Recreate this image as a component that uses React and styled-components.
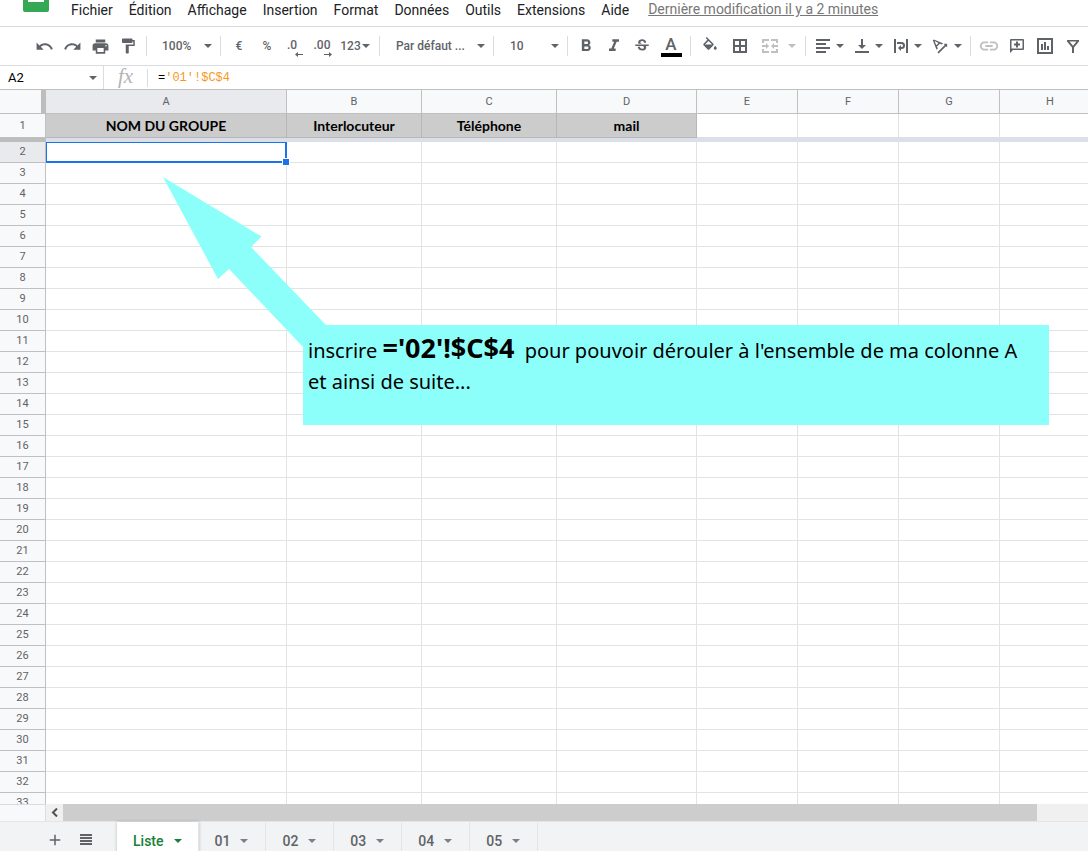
import React from 'react';
import styled, { createGlobalStyle, css } from 'styled-components';
import {
  MdAdd,
  MdFormatBold,
  MdFormatItalic,
  MdFormatPaint,
  MdLink,
  MdPrint,
  MdRedo,
  MdStrikethroughS,
  MdTextRotationAngleup,
  MdUndo,
} from 'react-icons/md';

const colors = {
  icon: '#5f6368',
  line: '#dadce0',
  headerLine: '#c0c0c0',
  header: '#f8f9fa',
  headerActive: '#e8eaed',
  grid: '#e2e3e3',
  freeze: '#dadfe8',
  freezeDark: '#bdbdbd',
  filled: '#cccccc',
  blue: '#1a73e8',
  green: '#188038',
  note: '#8dfffb',
};

const GlobalStyle = createGlobalStyle`
  * {
    box-sizing: border-box;
  }
  body {
    margin: 0;
    overflow: hidden;
    background: #fff;
    font-family: Roboto, 'Liberation Sans', sans-serif;
  }
  button, select, input {
    margin: 0;
    padding: 0;
    border: 0;
    background: none;
    color: inherit;
    font: inherit;
  }
`;

const flexCenter = css`
  display: flex;
  align-items: center;
  justify-content: center;
`;

const Screen = styled.div`
  display: flex;
  flex-direction: column;
  height: 100vh;
`;

/* menu bar */

const MenuBar = styled.header`
  display: flex;
  align-items: flex-start;
  height: 27px;
  flex-shrink: 0;
  padding-left: 23px;
  border-bottom: 1px solid ${colors.line};
`;

const Logo = styled.svg`
  display: block;
  margin-right: 14px;
`;

const Menu = styled.nav`
  display: flex;
  flex-shrink: 0;
`;

const MenuButton = styled.button`
  padding: 0 8px;
  font-size: 14px;
  line-height: 20px;
  color: #202124;
  white-space: nowrap;
`;

const LastEdit = styled.a`
  margin-left: 11px;
  font-size: 14px;
  line-height: 18px;
  color: #777;
  white-space: nowrap;
`;

/* toolbar */

const Toolbar = styled.div`
  display: flex;
  align-items: center;
  height: 39px;
  flex-shrink: 0;
  padding-left: 30px;
  border-bottom: 1px solid ${colors.line};
  color: ${colors.icon};
  overflow: hidden;
`;

const Separator = styled.span`
  width: 1px;
  height: 20px;
  margin: 0 4px;
  flex-shrink: 0;
  background: ${colors.line};
`;

const ToolButton = styled.button`
  ${flexCenter};
  width: ${({ $width = 28 }) => $width}px;
  height: 28px;
  flex-shrink: 0;
  gap: ${({ $gap = 6 }) => $gap}px;
  font-size: 12px;
  font-weight: 500;
  opacity: ${({ $faded }) => ($faded ? 0.4 : 1)};
`;

const SplitButton = styled(ToolButton)`
  width: ${({ $width = 39 }) => $width}px;
  gap: ${({ $gap = 4 }) => $gap}px;
  padding-right: 2px;
`;

const ColorButton = styled(ToolButton)`
  flex-direction: column;
  gap: 0;
  font-size: 17px;
  line-height: 18px;
`;

const ColorSwatch = styled.span`
  width: 21px;
  height: 4px;
  background: #000;
`;

const Decimals = styled.span`
  display: flex;
  flex-direction: column;
  align-items: flex-end;
  padding-top: 3px;
  line-height: 14px;
`;

const Digits = styled.span`
  padding-right: ${({ $space }) => $space}px;
`;

const SelectField = styled.label`
  display: grid;
  align-items: center;
  width: ${({ $width }) => $width}px;
  flex-shrink: 0;

  > * {
    grid-area: 1 / 1;
  }
`;

const Select = styled.select`
  appearance: none;
  width: 100%;
  height: 28px;
  padding-left: ${({ $pad }) => $pad}px;
  font-size: 12px;
  font-weight: 500;
`;

const CaretSlot = styled.span`
  display: flex;
  justify-self: end;
  margin-right: 4px;
  pointer-events: none;
`;

/* formula bar */

const FormulaBar = styled.div`
  display: flex;
  align-items: center;
  height: 24px;
  flex-shrink: 0;
  border-bottom: 1px solid ${colors.headerLine};
`;

const NameBox = styled.div`
  display: flex;
  align-items: center;
  justify-content: space-between;
  width: 104px;
  height: 100%;
  padding: 0 6px 0 8px;
  border-right: 1px solid ${colors.line};
  color: ${colors.icon};
`;

const NameInput = styled.input`
  width: 60px;
  font-size: 13px;
  color: #000;
  outline: none;
`;

const FxLabel = styled.span`
  ${flexCenter};
  width: 44px;
  height: 18px;
  padding-bottom: 4px;
  border-right: 1px solid ${colors.line};
  font-family: 'Liberation Serif', serif;
  font-size: 21px;
  font-style: italic;
  line-height: 18px;
  color: #b4b4b4;
`;

const FormulaInput = styled.div`
  flex: 1;
  padding-left: 10px;
  font-family: 'Liberation Mono', monospace;
  font-size: 12px;
  color: #000;
  outline: none;
`;

const Reference = styled.span`
  color: #f7981d;
`;

/* grid */

const SheetArea = styled.main`
  position: relative;
  flex: 1;
  min-height: 0;
  overflow: hidden;
`;

const Table = styled.table`
  width: 100%;
  min-width: 1101px;
  table-layout: fixed;
  border-collapse: separate;
  border-spacing: 0;
`;

const Corner = styled.td`
  height: 24px;
  padding: 0;
  background: ${colors.header};
  border-right: 5px solid ${colors.freezeDark};
  border-bottom: 1px solid ${colors.headerLine};
`;

const HeaderCell = styled.th`
  height: ${({ $height = 21 }) => $height}px;
  padding: 0;
  background: ${({ $active }) => ($active ? colors.headerActive : colors.header)};
  border-right: 1px solid ${colors.headerLine};
  border-bottom: 1px solid ${colors.headerLine};
  font-size: 11px;
  font-weight: 400;
  line-height: 12px;
  color: ${colors.icon};
`;

const Cell = styled.td`
  position: relative;
  padding: 0;
  border-right: 1px solid ${colors.grid};
  border-bottom: 1px solid ${colors.grid};
`;

const TitleCell = styled(Cell)`
  border-bottom-color: ${colors.freeze};
  font-family: Lato, 'Open Sans', sans-serif;
  font-size: 14px;
  font-weight: 700;
  line-height: 20px;
  text-align: center;
  color: #000;
  ${({ $filled }) =>
    $filled &&
    css`
      background: ${colors.filled};
      border-color: #b7b7b7;
    `}
`;

const FreezeCell = styled.td`
  height: 4px;
  padding: 0;
  background: ${({ $dark }) => ($dark ? colors.freezeDark : colors.freeze)};
`;

const Selection = styled.div`
  position: absolute;
  inset: 0 -1px -1px 0;
  z-index: 1;
  border: solid ${colors.blue};
  border-width: 1px 2px 2px 1px;
`;

const FillHandle = styled.span`
  position: absolute;
  right: -5px;
  bottom: -5px;
  width: 8px;
  height: 8px;
  border: 1px solid #fff;
  background: ${colors.blue};
`;

/* note lying over the grid */

const Note = styled.aside`
  position: absolute;
  top: 235px;
  left: 303px;
  z-index: 2;
  width: 746px;
  height: 100px;
  padding: 7px 5px;
  background: ${colors.note};
  font-family: 'Noto Sans', 'Open Sans', sans-serif;
  font-size: 20px;
  line-height: 31px;
  color: #000;

  p {
    margin: 0;
    white-space: nowrap;
  }
  strong {
    margin-right: 5px;
    font-size: 27px;
    line-height: 31px;
  }
`;

const Arrow = styled.svg`
  position: absolute;
  top: 87px;
  left: 163px;
  z-index: 2;
`;

/* scrollbar and sheet tabs */

const ScrollRow = styled.div`
  display: flex;
  height: 17px;
  flex-shrink: 0;
`;

const ScrollCorner = styled.div`
  width: 46px;
  background: ${colors.header};
  border-top: 1px solid ${colors.line};
  border-right: 1px solid ${colors.line};
`;

const ScrollButton = styled.button`
  ${flexCenter};
  width: 17px;
  background: #f0f0f0;
  color: #505050;
`;

const ScrollTrack = styled.div`
  flex: 1;
  background: #f0f0f0;
`;

const ScrollThumb = styled.div`
  width: 95%;
  height: 100%;
  background: #cdcdcd;
`;

const TabBar = styled.footer`
  display: flex;
  height: 30px;
  flex-shrink: 0;
  padding-left: 39px;
  background: #f1f3f4;
  border-top: 1px solid #e4e5e6;
  color: ${colors.icon};
`;

const BarButton = styled.button`
  ${flexCenter};
  width: 31px;
  height: 35px;
`;

const Tabs = styled.div`
  display: flex;
  margin-left: 16px;
`;

const Tab = styled.button`
  display: flex;
  align-items: center;
  height: 38px;
  gap: 10px;
  padding: 0 ${({ $active }) => ($active ? 16 : 17)}px 0 16px;
  border-right: 1px solid #e4e5e9;
  font-size: 14px;
  font-weight: 500;
  color: ${colors.icon};

  svg {
    opacity: 0.8;
  }
  ${({ $active }) =>
    $active &&
    css`
      background: #fff;
      color: ${colors.green};
      box-shadow: 0 0 3px rgba(60, 64, 67, 0.3);

      svg {
        opacity: 1;
      }
    `}
`;

const Caret = () => (
  <svg width="8" height="4" viewBox="0 0 8 4" fill="currentColor" aria-hidden="true">
    <path d="M0 0h8L4 4z" />
  </svg>
);

const Icon = ({ d, grid = 18 }) => (
  <svg width="18" height="18" viewBox={`0 0 ${grid} ${grid}`} fill="currentColor" aria-hidden="true">
    <path d={d} fillRule="evenodd" />
  </svg>
);

const icons = {
  fill:
    'M16.560 8.940L7.620 0 6.210 1.410l2.380 2.380-5.150 5.150a1.490 1.490 0 0 0 0 2.120l5.500 5.500c.290.290.680.440 1.060.440s.770-.150 1.060-.440l5.500-5.500c.590-.580.590-1.530 0-2.120zM5.210 10L10 5.210 14.790 10H5.210zM19 11.500s-2 2.170-2 3.500c0 1.100.900 2 2 2s2-.900 2-2c0-1.330-2-3.500-2-3.500z',
  borders:
    'M2 2v14h14V2H2zm6 12H4v-4h4v4zm0-6H4V4h4v4zm6 6h-4v-4h4v4zm0-6h-4V4h4v4z',
  merge:
    'M3 6H1V2h7v2H3v2zm7-2V2h7v4h-2V4h-5zm0 10h5v-2h2v4h-7v-2zM1 12h2v2h5v2H1v-4zm0-4h4V6l3 3-3 3v-2H1V8zm9 1l3-3v2h4v2h-4v2l-3-3z',
  alignLeft: 'M2 2h14v2H2zM2 6h10v2H2zM2 10h14v2H2zM2 14h10v2H2z',
  alignBottom: 'M2 14h14v2H2zM8 2h2v6h3l-4 4-4-4h3z',
  wrap:
    'M2 2h2v14H2zM14 2h2v14h-2zM5 5h4.500a3.500 3.500 0 0 1 0 7H9v2L6 11l3-3v2h.500a1.500 1.500 0 0 0 0-3H5z',
  comment:
    'M3 2h12a1 1 0 0 1 1 1v9a1 1 0 0 1-1 1H5l-3 3V3a1 1 0 0 1 1-1zm.500 1.500v8h11v-8zM8 4.500h2v2h2v2h-2v2H8v-2H6v-2h2z',
  chart:
    'M1 1h16v16H1zM3 3v12h12V3zM5 7h2v6H5zM8 5h2v8H8zM11 9h2v4h-2z',
  filter: 'M3 3h12v1.500l-5 6V16H8v-5.500l-5-6zM5.500 4.500L9 8.700l3.500-4.200z',
  sheets: 'M3 3h12v2H3zM3 6h12v2H3zM3 9h12v2H3zM3 12h12v2H3z',
};

const DecimalArrow = ({ right }) => (
  <svg width="8" height="5" viewBox="0 0 8 5" fill="currentColor" aria-hidden="true">
    <path d={right ? 'M0 2h5V0l3 2.500L5 5V3H0z' : 'M8 2H3V0L0 2.500 3 5V3h5z'} />
  </svg>
);

const ToolSelect = ({ label, value, width, pad }) => (
  <SelectField $width={width}>
    <Select $pad={pad} aria-label={label} defaultValue={value}>
      <option>{value}</option>
    </Select>
    <CaretSlot>
      <Caret />
    </CaretSlot>
  </SelectField>
);

const menus = [
  'Fichier',
  'Édition',
  'Affichage',
  'Insertion',
  'Format',
  'Données',
  'Outils',
  'Extensions',
  'Aide',
];

const columns = [
  { name: 'A', width: 241, title: 'NOM DU GROUPE' },
  { name: 'B', width: 135, title: 'Interlocuteur' },
  { name: 'C', width: 135, title: 'Téléphone' },
  { name: 'D', width: 140, title: 'mail' },
  { name: 'E', width: 101 },
  { name: 'F', width: 101 },
  { name: 'G', width: 101 },
  { name: 'H' },
];

const rows = Array.from({ length: 32 }, (_, i) => i + 2);

const sheets = ['Liste', '01', '02', '03', '04', '05'];

const Header = () => (
  <MenuBar>
    <Logo width="26" height="12" viewBox="0 0 26 12" aria-hidden="true">
      <path d="M0 0h26v10a2 2 0 0 1-2 2H2a2 2 0 0 1-2-2z" fill="#34a853" />
      <path d="M5 0h16v2H5z" fill="#fff" />
    </Logo>
    <Menu>
      {menus.map((menu) => (
        <MenuButton key={menu}>{menu}</MenuButton>
      ))}
    </Menu>
    <LastEdit href="#historique">Dernière modification il y a 2 minutes</LastEdit>
  </MenuBar>
);

const Tools = () => (
  <Toolbar>
    <ToolButton aria-label="Annuler"><MdUndo size={19} /></ToolButton>
    <ToolButton aria-label="Rétablir"><MdRedo size={19} /></ToolButton>
    <ToolButton aria-label="Imprimer"><MdPrint size={19} /></ToolButton>
    <ToolButton aria-label="Copier la mise en forme"><MdFormatPaint size={18} /></ToolButton>
    <Separator />
    <ToolSelect label="Zoom" value="100%" width={65} pad={11} />
    <Separator />
    <ToolButton aria-label="Format monétaire">€</ToolButton>
    <ToolButton aria-label="Format pourcentage">%</ToolButton>
    <ToolButton aria-label="Réduire les décimales">
      <Decimals><Digits $space={6}>.0</Digits><DecimalArrow /></Decimals>
    </ToolButton>
    <ToolButton aria-label="Ajouter des décimales">
      <Decimals><Digits $space={2}>.00</Digits><DecimalArrow right /></Decimals>
    </ToolButton>
    <SplitButton $width={38} $gap={1} aria-label="Autres formats">123<Caret /></SplitButton>
    <Separator />
    <ToolSelect label="Police" value="Par défaut ..." width={105} pad={12} />
    <Separator />
    <ToolSelect label="Taille" value="10" width={65} pad={12} />
    <Separator />
    <ToolButton aria-label="Gras"><MdFormatBold size={20} /></ToolButton>
    <ToolButton aria-label="Italique"><MdFormatItalic size={20} /></ToolButton>
    <ToolButton aria-label="Barré"><MdStrikethroughS size={18} /></ToolButton>
    <ColorButton $width={30} aria-label="Couleur du texte">
      A
      <ColorSwatch />
    </ColorButton>
    <Separator />
    <ToolButton $width={30} aria-label="Couleur de remplissage"><Icon d={icons.fill} grid={24} /></ToolButton>
    <ToolButton $width={30} aria-label="Bordures"><Icon d={icons.borders} /></ToolButton>
    <ToolButton $width={46} $gap={9} $faded aria-label="Fusionner"><Icon d={icons.merge} /><Caret /></ToolButton>
    <Separator />
    <SplitButton aria-label="Alignement horizontal"><Icon d={icons.alignLeft} /><Caret /></SplitButton>
    <SplitButton aria-label="Alignement vertical"><Icon d={icons.alignBottom} /><Caret /></SplitButton>
    <SplitButton aria-label="Retour à la ligne"><Icon d={icons.wrap} /><Caret /></SplitButton>
    <SplitButton aria-label="Rotation du texte"><MdTextRotationAngleup size={20} /><Caret /></SplitButton>
    <Separator />
    <ToolButton $faded aria-label="Insérer un lien"><MdLink size={22} /></ToolButton>
    <ToolButton aria-label="Insérer un commentaire"><Icon d={icons.comment} /></ToolButton>
    <ToolButton aria-label="Insérer un graphique"><Icon d={icons.chart} /></ToolButton>
    <ToolButton aria-label="Créer un filtre"><Icon d={icons.filter} /></ToolButton>
  </Toolbar>
);

const Formula = () => (
  <FormulaBar>
    <NameBox>
      <NameInput aria-label="Zone de nom" defaultValue="A2" />
      <Caret />
    </NameBox>
    <FxLabel>fx</FxLabel>
    <FormulaInput
      role="textbox"
      aria-label="Formule"
      contentEditable
      suppressContentEditableWarning
      spellCheck={false}
    >
      =<Reference>'01'!$C$4</Reference>
    </FormulaInput>
  </FormulaBar>
);

const Grid = () => (
  <Table>
    <colgroup>
      <col width="46" />
      {columns.map(({ name, width }) => (
        <col key={name} width={width} />
      ))}
    </colgroup>
    <thead>
      <tr>
        <Corner />
        {columns.map(({ name }) => (
          <HeaderCell key={name} scope="col" $height={24} $active={name === 'A'}>
            {name}
          </HeaderCell>
        ))}
      </tr>
    </thead>
    <tbody>
      <tr>
        <HeaderCell scope="row" $height={24}>1</HeaderCell>
        {columns.map(({ name, title }) => (
          <TitleCell key={name} $filled={Boolean(title)}>{title}</TitleCell>
        ))}
      </tr>
      <tr>
        <FreezeCell $dark />
        <FreezeCell colSpan={columns.length} />
      </tr>
      {rows.map((row) => (
        <tr key={row}>
          <HeaderCell scope="row" $active={row === 2}>{row}</HeaderCell>
          {columns.map(({ name }) => (
            <Cell key={name}>
              {row === 2 && name === 'A' && (
                <Selection>
                  <FillHandle />
                </Selection>
              )}
            </Cell>
          ))}
        </tr>
      ))}
    </tbody>
  </Table>
);

const SheetTabs = () => (
  <TabBar>
    <BarButton aria-label="Ajouter une feuille"><MdAdd size={18} /></BarButton>
    <BarButton aria-label="Toutes les feuilles"><Icon d={icons.sheets} /></BarButton>
    <Tabs>
      {sheets.map((sheet) => (
        <Tab key={sheet} $active={sheet === 'Liste'}>
          {sheet}
          <Caret />
        </Tab>
      ))}
    </Tabs>
  </TabBar>
);

const App = () => (
  <Screen>
    <GlobalStyle />
    <Header />
    <Tools />
    <Formula />
    <SheetArea>
      <Grid />
      <Arrow width="166" height="170" viewBox="0 0 166 170" aria-hidden="true">
        <path d="M0 0l98.500 59.500L88 70l75 78v22h-23L66 92l-11 10z" fill={colors.note} />
      </Arrow>
      <Note>
        <p>
          inscrire <strong>='02'!$C$4</strong> pour pouvoir dérouler à l'ensemble de ma colonne A
        </p>
        <p>et ainsi de suite...</p>
      </Note>
    </SheetArea>
    <ScrollRow>
      <ScrollCorner />
      <ScrollButton aria-label="Défiler vers la gauche">
        <svg width="7" height="9" viewBox="0 0 7 9" fill="none" stroke="currentColor" strokeWidth="2" aria-hidden="true">
          <path d="M6 0.500L2 4.500l4 4" />
        </svg>
      </ScrollButton>
      <ScrollTrack>
        <ScrollThumb />
      </ScrollTrack>
    </ScrollRow>
    <SheetTabs />
  </Screen>
);

export default App;
